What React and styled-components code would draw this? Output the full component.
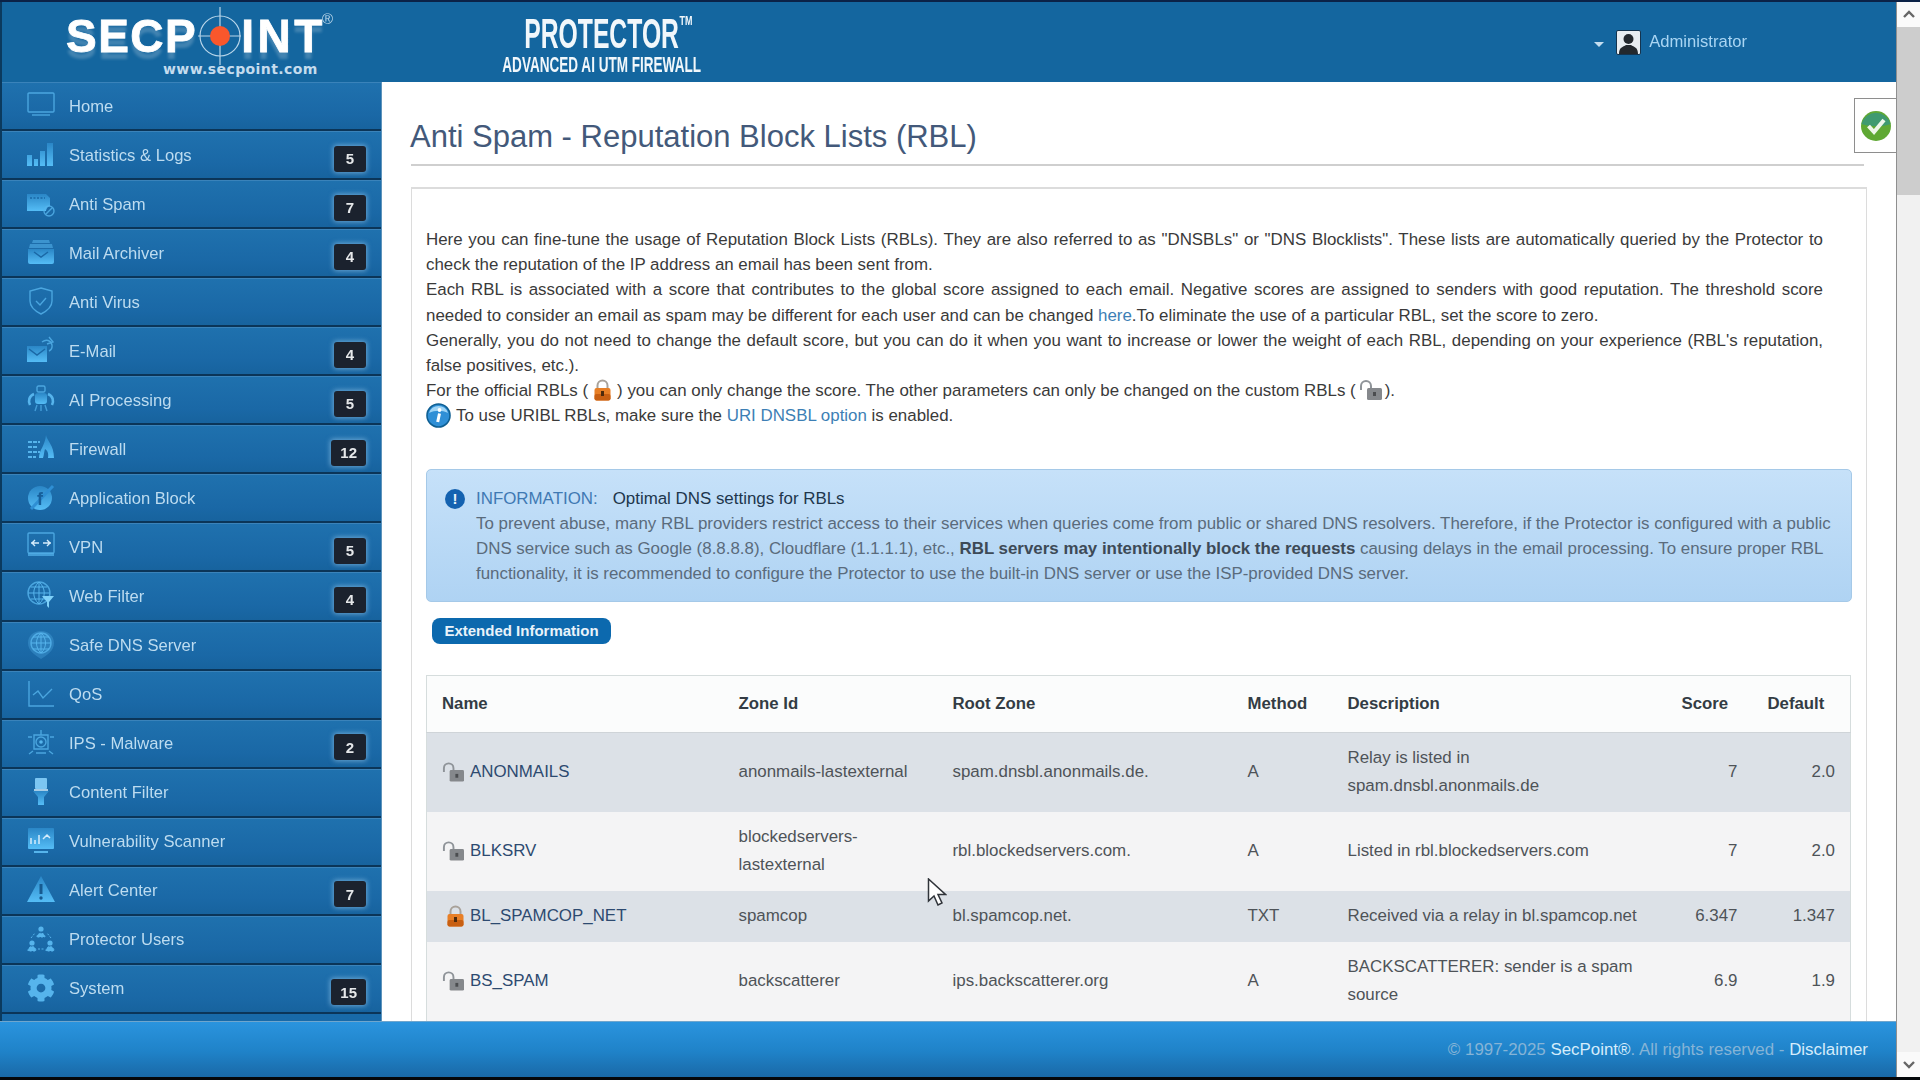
import React from "react";
import styled, { createGlobalStyle } from "styled-components";
import { FaCog } from "react-icons/fa";

const sans = `"Liberation Sans", Arial, sans-serif`;

const menu = [
  { label: "Home", icon: "home" },
  { label: "Statistics & Logs", icon: "stats", count: 5 },
  { label: "Anti Spam", icon: "spam", count: 7 },
  { label: "Mail Archiver", icon: "archive", count: 4 },
  { label: "Anti Virus", icon: "virus" },
  { label: "E-Mail", icon: "mail", count: 4 },
  { label: "AI Processing", icon: "robot", count: 5 },
  { label: "Firewall", icon: "firewall", count: 12 },
  { label: "Application Block", icon: "app" },
  { label: "VPN", icon: "vpn", count: 5 },
  { label: "Web Filter", icon: "web", count: 4 },
  { label: "Safe DNS Server", icon: "dns" },
  { label: "QoS", icon: "qos" },
  { label: "IPS - Malware", icon: "ips", count: 2 },
  { label: "Content Filter", icon: "filter" },
  { label: "Vulnerability Scanner", icon: "scan" },
  { label: "Alert Center", icon: "alert", count: 7 },
  { label: "Protector Users", icon: "users" },
  { label: "System", icon: "system", count: 15 },
];

const rows = [
  { name: "ANONMAILS", zone: "anonmails-lastexternal", root: "spam.dnsbl.anonmails.de.", method: "A", desc: "Relay is listed in\nspam.dnsbl.anonmails.de", score: "7", def: "2.0" },
  { name: "BLKSRV", zone: "blockedservers-\nlastexternal", root: "rbl.blockedservers.com.", method: "A", desc: "Listed in rbl.blockedservers.com", score: "7", def: "2.0" },
  { name: "BL_SPAMCOP_NET", locked: true, zone: "spamcop", root: "bl.spamcop.net.", method: "TXT", desc: "Received via a relay in bl.spamcop.net", score: "6.347", def: "1.347" },
  { name: "BS_SPAM", zone: "backscatterer", root: "ips.backscatterer.org", method: "A", desc: "BACKSCATTERER: sender is a spam\nsource", score: "6.9", def: "1.9" },
];

const columns = [297, 214, 295, 100, 334, 86, 98];

const Global = createGlobalStyle`
  html, body {
    margin: 0;
    height: 100%;
    overflow: hidden;
    background: #000;
  }
  * {
    box-sizing: border-box;
  }
`;

const Shell = styled.div`
  height: 100vh;
  display: flex;
  flex-direction: column;
  font-family: ${sans};
  font-size: 16.9px;
  border-top: 2px solid #0b2247;
  border-bottom: 3px solid #05070a;
  filter: blur(0.3px);
`;

const Page = styled.div`
  flex: 1;
  min-height: 0;
  display: flex;
`;

const Left = styled.div`
  flex: 1;
  min-width: 0;
  display: flex;
  flex-direction: column;
`;

const Header = styled.header`
  height: 80px;
  flex: none;
  display: flex;
  align-items: flex-start;
  padding-left: 64px;
  background: #14669f;
  border-left: 2px solid #0b3a5e;
`;

const Logo = styled.div`
  width: 274px;
  display: flex;
  flex-direction: column;
`;

const Wordmark = styled.div`
  display: flex;
  align-items: center;
  height: 60px;
  margin-top: 4px;
  position: relative;
  color: #fff;
  font-weight: 700;
  font-size: 46px;
  line-height: 60px;
  -webkit-text-stroke: 0.8px #fff;
  text-shadow: 0 7px 3px rgba(255, 255, 255, 0.2);
`;

const WordPart = styled.span`
  letter-spacing: ${(p) => p.$spacing}px;
`;

const Registered = styled.span`
  position: absolute;
  left: 256px;
  top: -17px;
  font-size: 15px;
  font-weight: 400;
  color: #b9d6ea;
  -webkit-text-stroke: 0;
  text-shadow: none;
`;

const LogoUrl = styled.div`
  margin: -5px 0 0 97px;
  font-family: "DejaVu Sans", sans-serif;
  font-size: 14px;
  line-height: 16px;
  font-weight: 700;
  letter-spacing: 0.4px;
  color: #c4dcee;
  white-space: nowrap;
`;

const Product = styled.div`
  width: 240px;
  margin: 13px 0 0 142px;
  display: flex;
  flex-direction: column;
  align-items: center;
  color: #f1f7fb;
  font-weight: 700;
  white-space: nowrap;
`;

const ProductName = styled.div`
  position: relative;
  font-size: 43px;
  line-height: 36px;
  transform: scaleX(0.575);
`;

const Trademark = styled.span`
  position: absolute;
  left: 100%;
  top: 0;
  font-size: 12px;
  line-height: 12px;
  transform: scaleX(1.3);
  transform-origin: left;
  margin-left: 1px;
`;

const ProductTag = styled.div`
  font-size: 21.5px;
  line-height: 22px;
  margin-top: 3px;
  transform: scaleX(0.63);
`;

const UserMenu = styled.div`
  margin: 27px 0 0 auto;
  padding-right: 149px;
  display: flex;
  align-items: center;
  height: 26px;
  font-size: 16.6px;
  color: #a9d5f3;
`;

const Caret = styled.span`
  width: 0;
  height: 0;
  margin: 4px 12px 0 0;
  border-left: 5px solid transparent;
  border-right: 5px solid transparent;
  border-top: 5px solid #c4def0;
`;

const Avatar = styled.span`
  width: 25px;
  height: 25px;
  margin-right: 8px;
  border: 1px solid #14344f;
  border-radius: 2px;
  background: #e8edf1;
  display: flex;
`;

const Middle = styled.div`
  flex: 1;
  min-height: 0;
  display: flex;
`;

const Sidebar = styled.nav`
  width: 382px;
  flex: none;
  background: linear-gradient(#1f74b3, #186aa9);
  border-left: 2px solid #0b3a5e;
  border-right: 1px solid #5d93bb;
  overflow: hidden;
`;

const NavRow = styled.div`
  height: 49.05px;
  display: flex;
  align-items: center;
  padding: 0 15px 0 25px;
  color: #bddcf0;
  font-size: 16.6px;
  background: linear-gradient(#1f71ae, #1a68a6 70%, #17639e);
  border-top: 1px solid #3a83ba;
  border-bottom: 2px solid #0b3558;
`;

const NavIcon = styled.span`
  width: 28px;
  height: 28px;
  margin: -2px 14px 0 0;
  flex: none;
  display: flex;
  color: #56b4ec;
`;

const NavLabel = styled.span`
  flex: 1;
  padding-top: 1px;
`;

const Badge = styled.span`
  min-width: 32px;
  height: 26px;
  padding: 0 9px;
  margin: 7px 0 0;
  display: flex;
  align-items: center;
  justify-content: center;
  background: #1b222e;
  border-radius: 3px;
  color: #e6e8ea;
  font-size: 15px;
  font-weight: 700;
  box-shadow: 0 0 5px 1px rgba(170, 215, 245, 0.55);
`;

const Main = styled.main`
  flex: 1;
  min-width: 0;
  position: relative;
  overflow: hidden;
  background: #fff;
  padding: 0 29px;
`;

const Title = styled.h1`
  height: 84px;
  margin: 0 3px 0 0;
  padding-top: 37px;
  font-size: 31px;
  line-height: 36px;
  font-weight: 400;
  text-indent: -1px;
  color: #43597a;
  border-bottom: 2px solid #cfcfcf;
`;

const Panel = styled.section`
  margin-top: 21px;
  padding: 38px 14px 40px;
  border: 1px solid #dcdcdc;
  border-width: 2px 1px 1px;
  color: #3a3a3a;
`;

const Intro = styled.div`
  width: 1397px;
  line-height: 25.2px;
`;

const Line = styled.div`
  height: 25.2px;
  text-align: ${(p) => (p.$justify ? "justify" : "left")};
  text-align-last: ${(p) => (p.$justify ? "justify" : "left")};
  white-space: ${(p) => (p.$justify ? "normal" : "nowrap")};
  display: ${(p) => (p.$flex ? "flex" : "block")};
  align-items: center;
`;

const TextLink = styled.a`
  color: #3d7fb5;
`;

const InlineIcon = styled.span`
  display: inline-flex;
  vertical-align: -5px;
  margin: 0 ${(p) => p.$gap || 0}px;
`;

const InfoBadge = styled.span`
  width: 25px;
  height: 25px;
  margin-right: 5px;
  flex: none;
  display: flex;
`;

const Notice = styled.div`
  margin-top: 40px;
  height: 133px;
  padding: 16px 15px 14px 18px;
  display: flex;
  gap: 11px;
  background: linear-gradient(#c6e1f9, #afd3f3);
  border: 1px solid #a5c9e8;
  border-radius: 5px;
  line-height: 25.2px;
  color: #5a6b7c;
`;

const NoticeDot = styled.span`
  width: 20px;
  height: 20px;
  margin-top: 3px;
  flex: none;
  border-radius: 50%;
  background: #1462b0;
  color: #e9f2fa;
  font-size: 15px;
  line-height: 20px;
  font-weight: 700;
  text-align: center;
`;

const NoticeHead = styled.div`
  color: #20364c;
`;

const NoticeLabel = styled.span`
  color: #3f79b3;
  margin-right: 15px;
`;

const NoticeStrong = styled.strong`
  color: #3d4a57;
`;

const ExtendedButton = styled.button`
  display: block;
  width: 179px;
  height: 26px;
  margin: 16px 0 31px 6px;
  padding: 0;
  border: 0;
  border-radius: 8px;
  background: #0c69ae;
  color: #e9f3fa;
  font: 700 15px ${sans};
`;

const RblTable = styled.table`
  width: 1424px;
  table-layout: fixed;
  border-collapse: collapse;
  border: 1px solid #d6dddd;
  line-height: 28px;
`;

const HeadCell = styled.th`
  height: 57px;
  padding: 0 15px;
  text-align: left;
  font-size: 16.8px;
  font-weight: 700;
  color: #333c44;
  background: #fbfcfc;
  border-bottom: 1px solid #cfd4d8;
`;

const Row = styled.tr`
  background: ${(p) => (p.$odd ? "#dce1e7" : "#f4f4f5")};
`;

const Cell = styled.td`
  padding: 11.5px 15px;
  color: #4e5358;
  white-space: pre-line;
  text-align: ${(p) => (p.$right ? "right" : "left")};
`;

const NameWrap = styled.div`
  display: flex;
  align-items: center;
  gap: 6px;
  color: #2d4a70;
`;

const LockBox = styled.span`
  width: 22px;
  display: flex;
  justify-content: flex-end;
`;

const StatusTab = styled.div`
  position: absolute;
  right: 0;
  top: 16px;
  width: 42px;
  height: 55px;
  display: flex;
  align-items: center;
  justify-content: center;
  background: #fff;
  border: 1px solid #8e8e8e;
  border-right: 0;
`;

const Cursor = styled.svg`
  position: absolute;
  left: 545px;
  top: 796px;
`;

const Footer = styled.footer`
  height: 56px;
  flex: none;
  display: flex;
  align-items: center;
  justify-content: flex-end;
  padding: 0 28px 0 0;
  background: linear-gradient(#2a94de, #1f82c8 55%, #1a69a7);
  border-top: 1px solid #6fa6cd;
  color: #86b4d6;
`;

const FooterStrong = styled.span`
  color: #d5ecfb;
`;

const Scrollbar = styled.aside`
  width: 24px;
  flex: none;
  display: flex;
  flex-direction: column;
  background: #f1f1f1;
  border-left: 1px solid #8f8f8f;
`;

const ScrollButton = styled.span`
  height: 25px;
  flex: none;
  display: flex;
  align-items: center;
  justify-content: center;
  color: #666;
  margin-top: ${(p) => (p.$end ? "auto" : "0")};
  background: #fafafa;
`;

const ScrollThumb = styled.span`
  height: 168px;
  flex: none;
  background: #cdcdcd;
`;

const Chevron = ({ up }) => (
  <svg width="14" height="9" viewBox="0 0 14 9">
    <path d={up ? "M2 7l5-5 5 5" : "M2 2l5 5 5-5"} fill="none" stroke="currentColor" strokeWidth="2.4" />
  </svg>
);

const OpenLock = () => (
  <svg width="23" height="22" viewBox="0 0 23 22">
    <path d="M2 11V7a5 5 0 0 1 10 0v3" fill="none" stroke="#8f9499" strokeWidth="2" />
    <rect x="8" y="9" width="15" height="12" rx="1.5" fill="#85888c" />
    <rect x="14" y="13" width="3" height="4" fill="#4b4d50" />
  </svg>
);

const ClosedLock = () => (
  <svg width="17" height="22" viewBox="0 0 17 22">
    <path d="M3.5 10V6.5a5 5 0 0 1 10 0V10" fill="none" stroke="#a9a29a" strokeWidth="2" />
    <rect x="0.5" y="9" width="16" height="12.5" rx="2" fill="#e87f26" />
    <rect x="0.5" y="15" width="16" height="6.5" rx="2" fill="#c85f12" />
    <rect x="7" y="12" width="3" height="5" fill="#4d2a0c" />
  </svg>
);

const stroke = { fill: "none", stroke: "currentColor", strokeWidth: 1.4, opacity: 0.8 };
const glow = "url(#iconGlow)";

const icons = {
  home: (
    <>
      <rect x="1" y="2" width="26" height="19" rx="1" {...stroke} />
      <path d="M5 24h18" {...stroke} />
    </>
  ),
  stats: (
    <path d="M0 15h5v11H0zM7 19h4v7H7zM13 11h5v15h-5zM20 3h6v23h-6z" fill={glow} />
  ),
  spam: (
    <>
      <path d="M0 5h19l4 4v8a6 6 0 0 0-4 5H0z" fill={glow} />
      <path d="M3 9h15" stroke="#1a68a6" strokeWidth="1.6" strokeDasharray="2 1.5" />
      <circle cx="22" cy="22" r="5" {...stroke} />
      <path d="M19 25l6-6" {...stroke} />
    </>
  ),
  archive: (
    <>
      <path d="M6 2h16l1 3H5zM3 6h22l1 4H2z" fill="currentColor" opacity=".55" />
      <path d="M1 11h26v13a2 2 0 0 1-2 2H3a2 2 0 0 1-2-2z" fill={glow} />
      <path d="M7 14l7 5 7-5" fill="none" stroke="#1a68a6" strokeWidth="1.5" />
    </>
  ),
  virus: (
    <>
      <path d="M14 1l11 3v10c0 6-5 10-11 13C8 24 3 20 3 14V4z" {...stroke} />
      <path d="M9 14l4 4 6-7" {...stroke} />
    </>
  ),
  mail: (
    <>
      <path d="M0 10h20v16H0z" fill={glow} />
      <path d="M2 13l8 6 8-6" fill="none" stroke="#1a68a6" strokeWidth="1.5" />
      <path d="M15 6c4-3 9-2 10 3 .5 3-1 5-3 6M22 1l4 5-6 2" {...stroke} />
    </>
  ),
  robot: (
    <>
      <rect x="10" y="1" width="8" height="6" rx="1.5" {...stroke} />
      <rect x="8" y="8" width="12" height="11" rx="3" fill={glow} />
      <path d="M7 9c-5 2-6 7-4 11M21 9c5 2 6 7 4 11" fill="none" stroke="currentColor" strokeWidth="2.6" />
      <path d="M10 20l-2 6M18 20l2 6M14 20v6" fill="none" stroke="currentColor" strokeWidth="1.4" opacity=".7" />
    </>
  ),
  firewall: (
    <>
      <path d="M1 8h12M1 13h10M1 18h12M1 23h8" stroke="currentColor" strokeWidth="2" strokeDasharray="4 1" />
      <path d="M19 1c1 6 8 10 8 23h-6c1-5-1-8-3-9-1 3-1 6-2 9h-4c0-8 6-12 7-23z" fill={glow} />
    </>
  ),
  app: (
    <>
      <circle cx="13" cy="15" r="12" fill={glow} />
      <path d="M4 26L26 3" stroke="#2f8fd4" strokeWidth="3" />
      <text x="13" y="22" textAnchor="middle" fontSize="18" fontWeight="700" fontFamily={sans} fill="#165f9b">f</text>
    </>
  ),
  vpn: (
    <>
      <rect x="1" y="1" width="26" height="20" rx="1" {...stroke} />
      <path d="M4 11h8M5 11l3-3M5 11l3 3M16 11h8M23 11l-3-3M23 11l-3 3" fill="none" stroke="#d5ecfb" strokeWidth="1.4" />
      <path d="M1 21h26v3H1z" fill="currentColor" opacity=".7" />
    </>
  ),
  web: (
    <>
      <circle cx="12" cy="12" r="11" {...stroke} />
      <path d="M1 12h22M12 1v22M4 6h16M4 18h16M12 1c-7 6-7 16 0 22M12 1c7 6 7 16 0 22" fill="none" stroke="currentColor" strokeWidth="1" />
      <path d="M15 15h12l-5 6v6l-2-2v-4z" fill="#7fd0f8" />
    </>
  ),
  dns: (
    <>
      <path d="M14 0c8 0 13 5 13 12 0 8-7 12-13 16C8 24 1 20 1 12 1 5 6 0 14 0z" fill="currentColor" opacity=".3" />
      <circle cx="14" cy="12" r="10" {...stroke} />
      <path d="M4 12h20M14 2v20M6 6h16M6 18h16M14 2c-6 5-6 15 0 20M14 2c6 5 6 15 0 20" fill="none" stroke="currentColor" strokeWidth="1" />
    </>
  ),
  qos: (
    <>
      <path d="M2 1v25h25" {...stroke} />
      <path d="M6 15l5-4 5 7 9-9" {...stroke} />
    </>
  ),
  ips: (
    <>
      <circle cx="14" cy="13" r="5" {...stroke} />
      <path d="M7 6h14v14H7zM14 1v5M1 8h4M23 8h4M6 22l-4 3M22 22l4 3M9 24h10" {...stroke} />
      <circle cx="14" cy="13" r="1.8" fill="currentColor" />
    </>
  ),
  filter: (
    <>
      <rect x="8" y="0" width="12" height="11" rx="1" fill="#7cc6f2" />
      <path d="M6 13h16l-5 6v8h-6v-8z" fill={glow} />
      <path d="M7 12h14" stroke="#d5ecfb" strokeWidth="1.5" />
    </>
  ),
  scan: (
    <>
      <rect x="1" y="1" width="26" height="21" rx="1" fill={glow} />
      <path d="M4 17v-6M8 17v-4M12 17V8M16 12l4-4 3 3" fill="none" stroke="#d5ecfb" strokeWidth="1.5" />
      <path d="M7 25h14" stroke="currentColor" strokeWidth="2" />
    </>
  ),
  alert: (
    <>
      <path d="M14 0l14 26H0z" fill={glow} />
      <path d="M14 8v10" stroke="#165a90" strokeWidth="3" />
      <circle cx="14" cy="22" r="1.7" fill="#165a90" />
    </>
  ),
  users: (
    <>
      <circle cx="14" cy="4" r="2.6" fill="currentColor" />
      <circle cx="5" cy="18" r="2.6" fill="currentColor" />
      <circle cx="23" cy="18" r="2.6" fill="currentColor" />
      <path d="M1 26c0-6 8-6 8 0zM19 26c0-6 8-6 8 0zM10 12c0-5 8-5 8 0zM4 13l4-5M24 13l-4-5M11 24h6" fill="currentColor" stroke="currentColor" strokeDasharray="2 1.5" />
    </>
  ),
};

const MenuIcon = ({ name }) =>
  name === "system" ? (
    <FaCog size={28} />
  ) : (
    <svg width="28" height="28" viewBox="0 0 28 28">
      {icons[name]}
    </svg>
  );

const App = () => (
  <>
    <Global />
    <svg width="0" height="0" style={{ position: "absolute" }}>
      <defs>
        <linearGradient id="iconGlow" x1="0" y1="0" x2="0" y2="1">
          <stop offset="0" stopColor="#2a86c6" />
          <stop offset="1" stopColor="#55bdf6" />
        </linearGradient>
      </defs>
    </svg>
    <Shell>
      <Page>
        <Left>
          <Header>
            <Logo>
              <Wordmark>
                <WordPart $spacing={1.5}>SECP</WordPart>
                <svg width="44" height="58" viewBox="0 0 44 58">
                  <circle cx="23" cy="29" r="20" fill="none" stroke="#b9d6ea" strokeWidth="1.2" />
                  <path d="M23 0v58M1 29h43" stroke="#b9d6ea" strokeWidth="1.2" />
                  <circle cx="23" cy="29" r="10" fill="#f9572c" />
                </svg>
                <WordPart $spacing={3.5}>INT</WordPart>
                <Registered>®</Registered>
              </Wordmark>
              <LogoUrl>www.secpoint.com</LogoUrl>
            </Logo>
            <Product>
              <ProductName>
                PROTECTOR
                <Trademark>TM</Trademark>
              </ProductName>
              <ProductTag>ADVANCED AI UTM FIREWALL</ProductTag>
            </Product>
            <UserMenu>
              <Caret />
              <Avatar>
                <svg width="23" height="23" viewBox="0 0 23 23">
                  <circle cx="11.5" cy="8" r="5" fill="#23282d" />
                  <path d="M2 23c0-7 4-7 7-9h5c3 2 7 2 7 9z" fill="#23282d" />
                </svg>
              </Avatar>
              Administrator
            </UserMenu>
          </Header>
          <Middle>
            <Sidebar>
              {menu.map((item) => (
                <NavRow key={item.label}>
                  <NavIcon>
                    <MenuIcon name={item.icon} />
                  </NavIcon>
                  <NavLabel>{item.label}</NavLabel>
                  {item.count && <Badge>{item.count}</Badge>}
                </NavRow>
              ))}
            </Sidebar>
            <Main>
              <Title>Anti Spam - Reputation Block Lists (RBL)</Title>
              <Panel>
                <Intro>
                  <Line $justify>
                    Here you can fine-tune the usage of Reputation Block Lists (RBLs). They are also referred to as "DNSBLs" or "DNS Blocklists". These lists are automatically queried by the Protector to
                  </Line>
                  <Line>check the reputation of the IP address an email has been sent from.</Line>
                  <Line $justify>
                    Each RBL is associated with a score that contributes to the global score assigned to each email. Negative scores are assigned to senders with good reputation. The threshold score
                  </Line>
                  <Line>
                    needed to consider an email as spam may be different for each user and can be changed <TextLink>here</TextLink>.To eliminate the use of a particular RBL, set the score to zero.
                  </Line>
                  <Line $justify>
                    Generally, you do not need to change the default score, but you can do it when you want to increase or lower the weight of each RBL, depending on your experience (RBL's reputation,
                  </Line>
                  <Line>false positives, etc.).</Line>
                  <Line>
                    For the official RBLs (
                    <InlineIcon $gap={6}>
                      <ClosedLock />
                    </InlineIcon>
                    ) you can only change the score. The other parameters can only be changed on the custom RBLs (
                    <InlineIcon $gap={3}>
                      <OpenLock />
                    </InlineIcon>
                    ).
                  </Line>
                  <Line $flex>
                    <InfoBadge>
                      <svg width="25" height="25" viewBox="0 0 25 25">
                        <circle cx="12.5" cy="12.5" r="11.5" fill="#2f8fd6" stroke="#0f5f92" strokeWidth="1.6" />
                        <path d="M3 10a10 10 0 0 1 19 0c-6-3-13-3-19 0z" fill="#9fd4f5" />
                        <circle cx="13.5" cy="7" r="1.9" fill="#fff" />
                        <path d="M13.5 10.5l-1.8 8.5" stroke="#fff" strokeWidth="3" />
                      </svg>
                    </InfoBadge>
                    <span>
                      To use URIBL RBLs, make sure the <TextLink>URI DNSBL option</TextLink> is enabled.
                    </span>
                  </Line>
                </Intro>
                <Notice>
                  <NoticeDot>!</NoticeDot>
                  <div>
                    <NoticeHead>
                      <NoticeLabel>INFORMATION:</NoticeLabel>Optimal DNS settings for RBLs
                    </NoticeHead>
                    To prevent abuse, many RBL providers restrict access to their services when queries come from public or shared DNS resolvers. Therefore, if the Protector is configured with a public DNS service such as Google (8.8.8.8), Cloudflare (1.1.1.1), etc., <NoticeStrong>RBL servers may intentionally block the requests</NoticeStrong> causing delays in the email processing. To ensure proper RBL functionality, it is recommended to configure the Protector to use the built-in DNS server or use the ISP-provided DNS server.
                  </div>
                </Notice>
                <ExtendedButton>Extended Information</ExtendedButton>
                <RblTable>
                  <colgroup>
                    {columns.map((width, i) => (
                      <col key={i} width={width} />
                    ))}
                  </colgroup>
                  <thead>
                    <tr>
                      {["Name", "Zone Id", "Root Zone", "Method", "Description", "Score", "Default"].map((head) => (
                        <HeadCell key={head}>{head}</HeadCell>
                      ))}
                    </tr>
                  </thead>
                  <tbody>
                    {rows.map((row, i) => (
                      <Row key={row.name} $odd={i % 2 === 0}>
                        <Cell>
                          <NameWrap>
                            <LockBox>{row.locked ? <ClosedLock /> : <OpenLock />}</LockBox>
                            {row.name}
                          </NameWrap>
                        </Cell>
                        <Cell>{row.zone}</Cell>
                        <Cell>{row.root}</Cell>
                        <Cell>{row.method}</Cell>
                        <Cell>{row.desc}</Cell>
                        <Cell $right>{row.score}</Cell>
                        <Cell $right>{row.def}</Cell>
                      </Row>
                    ))}
                  </tbody>
                </RblTable>
              </Panel>
              <StatusTab>
                <svg width="32" height="32" viewBox="0 0 32 32">
                  <circle cx="16" cy="16" r="15" fill="#5fa833" />
                  <path d="M1.5 14a15 15 0 0 1 29 0c-8 3-20 3-29 0z" fill="#3f9a70" />
                  <path d="M8.5 16l5.5 6 10-12" fill="none" stroke="#eef6ea" strokeWidth="4" />
                </svg>
              </StatusTab>
              <Cursor width="20" height="28" viewBox="0 0 20 28">
                <path d="M1.5 1v22l5.5-5 4 9 4-2-4-8.5h7.5z" fill="#fff" stroke="#30343a" strokeWidth="1.5" />
              </Cursor>
            </Main>
          </Middle>
          <Footer>
            <span>
              © 1997-2025 <FooterStrong>SecPoint®</FooterStrong>. All rights reserved - <FooterStrong>Disclaimer</FooterStrong>
            </span>
          </Footer>
        </Left>
        <Scrollbar>
          <ScrollButton>
            <Chevron up />
          </ScrollButton>
          <ScrollThumb />
          <ScrollButton $end>
            <Chevron />
          </ScrollButton>
        </Scrollbar>
      </Page>
    </Shell>
  </>
);

export default App;
